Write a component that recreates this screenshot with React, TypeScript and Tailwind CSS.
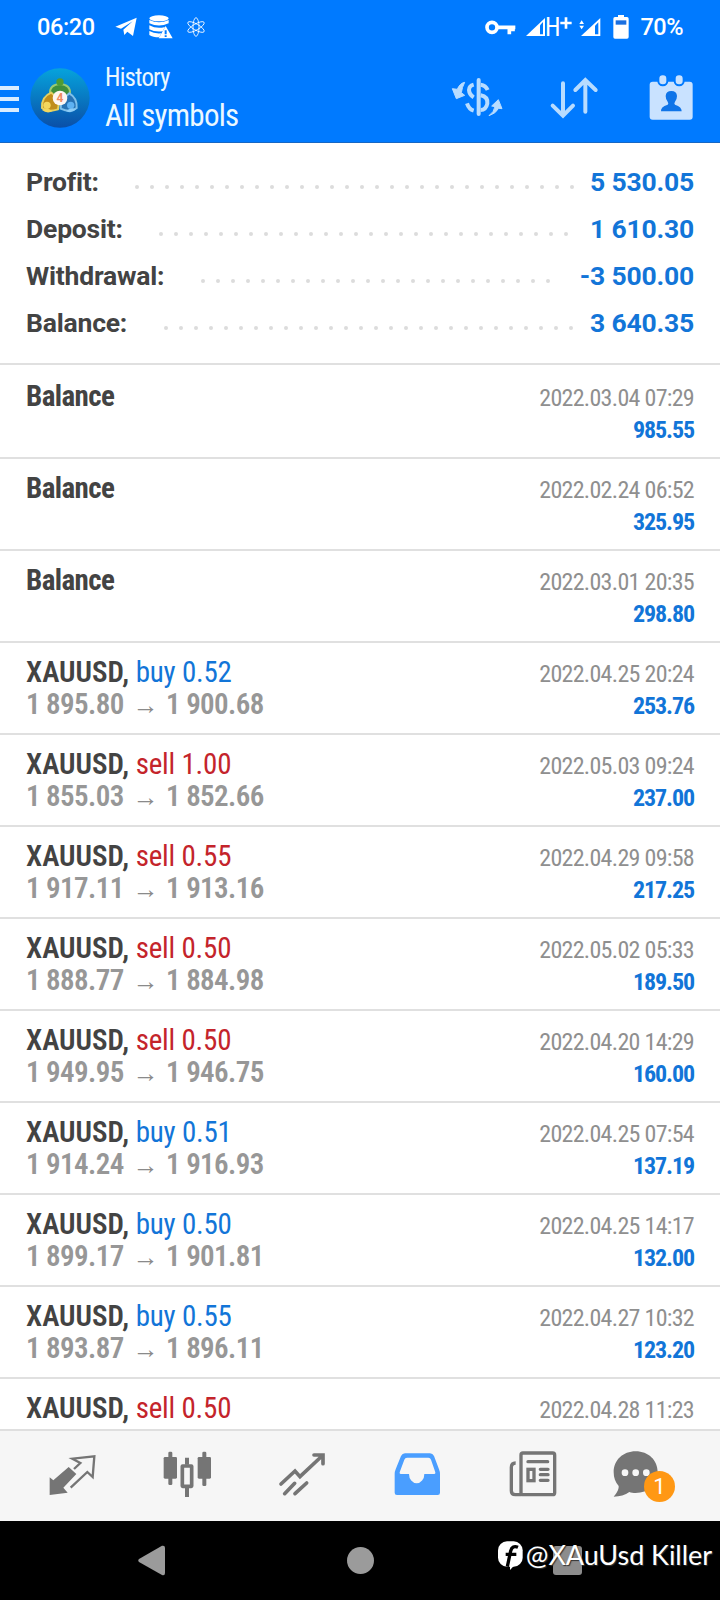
import { memo } from "react";
import type { ReactNode } from "react";

type DealKind = "buy" | "sell" | "balance";

interface Deal {
  kind: DealKind;
  volume?: string;
  open?: string;
  close?: string;
  time: string;
  profit: string;
}

const SUMMARY = [
  { label: "Profit:", value: "5 530.05", dots: 30 },
  { label: "Deposit:", value: "1 610.30", dots: 28 },
  { label: "Withdrawal:", value: "-3 500.00", dots: 24 },
  { label: "Balance:", value: "3 640.35", dots: 28 },
];

const DEALS: Deal[] = [
  { kind: "balance", time: "2022.03.04 07:29", profit: "985.55" },
  { kind: "balance", time: "2022.02.24 06:52", profit: "325.95" },
  { kind: "balance", time: "2022.03.01 20:35", profit: "298.80" },
  { kind: "buy", volume: "0.52", open: "1 895.80", close: "1 900.68", time: "2022.04.25 20:24", profit: "253.76" },
  { kind: "sell", volume: "1.00", open: "1 855.03", close: "1 852.66", time: "2022.05.03 09:24", profit: "237.00" },
  { kind: "sell", volume: "0.55", open: "1 917.11", close: "1 913.16", time: "2022.04.29 09:58", profit: "217.25" },
  { kind: "sell", volume: "0.50", open: "1 888.77", close: "1 884.98", time: "2022.05.02 05:33", profit: "189.50" },
  { kind: "sell", volume: "0.50", open: "1 949.95", close: "1 946.75", time: "2022.04.20 14:29", profit: "160.00" },
  { kind: "buy", volume: "0.51", open: "1 914.24", close: "1 916.93", time: "2022.04.25 07:54", profit: "137.19" },
  { kind: "buy", volume: "0.50", open: "1 899.17", close: "1 901.81", time: "2022.04.25 14:17", profit: "132.00" },
  { kind: "buy", volume: "0.55", open: "1 893.87", close: "1 896.11", time: "2022.04.27 10:32", profit: "123.20" },
  { kind: "sell", volume: "0.50", open: "1 889.26", close: "1 887.71", time: "2022.04.28 11:23", profit: "77.50" },
];

function StatusBar() {
  return (
    <div className="flex h-[54px] items-center pl-[37px] pr-[37px] text-white">
      <span className="w-[58px] text-[23.5px] leading-[54px] font-medium tracking-[-0.4px]">06:20</span>
      <svg className="ml-5 h-5 w-[22px]" viewBox="0 0 66 60" fill="currentColor">
        <path d="M1 29 65 2 54 57 37 44 28 54 25 38 53 13 18 35Z" />
      </svg>
      <svg className="ml-[12px] h-6 w-6" viewBox="0 0 72 72" fill="currentColor">
        <ellipse cx="30" cy="10" rx="29" ry="9" />
        <path d="M1 15q29 14 58 0v10q-29 13-58 0ZM1 31q22 12 47 5l-7 13q-24 3-40-6ZM1 48q15 9 36 7l-6 12q-20 0-30-7Z" />
        <path fillRule="evenodd" d="M50 33 71 70H29ZM47 46v12h6V46ZM47 61v5h6v-5Z" />
      </svg>
      <svg className="ml-[14px] h-5 w-[18px]" viewBox="0 0 54 60" fill="none" stroke="currentColor" strokeWidth="2.5">
        <ellipse cx="27" cy="30" rx="9" ry="28" />
        <ellipse cx="27" cy="30" rx="9" ry="28" transform="rotate(60 27 30)" />
        <ellipse cx="27" cy="30" rx="9" ry="28" transform="rotate(120 27 30)" />
      </svg>

      <div className="ml-auto flex items-center">
        <svg className="h-[15px] w-[31px]" viewBox="0 0 93 45" fill="none" stroke="currentColor">
          <circle cx="21" cy="22" r="15" strokeWidth="11" />
          <path d="M36 22H91M73 22V43M84 22V34" strokeWidth="11" />
        </svg>
        <svg className="ml-[10px] h-[18px] w-[19px]" viewBox="0 0 57 54">
          <path d="M0 54 57 0V54Z" fill="currentColor" />
          <path d="M42 22 51 12V49H42Z" fill="#007aff" />
        </svg>
        <span className="mt-[2px] text-[25px] leading-[52px] font-stretch-condensed">H</span>
        <svg className="mb-[9px] h-[12px] w-[12px]" viewBox="0 0 36 36" stroke="currentColor" strokeWidth="8">
          <path d="M18 1V35M1 18H35" />
        </svg>
        <svg className="ml-[7px] h-[18px] w-[22px]" viewBox="0 0 66 54" fill="currentColor">
          <path d="M1 18 8 7 15 18ZM1 23 8 34 15 23Z" />
          <path d="M6 54 64 0V54Z" />
          <path d="M48 23 58 13V49H48Z" fill="#007aff" />
        </svg>
        <svg className="ml-[12px] h-6 w-[16px]" viewBox="0 0 48 72">
          <path d="M15 0H33V6H42Q47 6 47 11V66Q47 71 42 71H6Q1 71 1 66V11Q1 6 6 6H15Z" fill="currentColor" />
          <path d="M8 16H40V29H8Z" fill="#1a6fe0" />
        </svg>
        <span className="ml-[11px] text-[23.5px] leading-[54px] font-medium tracking-[-0.5px]">70%</span>
      </div>
    </div>
  );
}

function AppLogo() {
  return (
    <svg className="ml-[11px] h-[60px] w-[60px] shrink-0" viewBox="0 0 180 180">
      <defs>
        <linearGradient id="sky" x1="0" y1="0" x2="0" y2="1">
          <stop offset="0" stopColor="#06a3dc" />
          <stop offset="1" stopColor="#0a4fa8" />
        </linearGradient>
      </defs>
      <circle cx="90" cy="90" r="89" fill="url(#sky)" />
      <g strokeWidth="6">
        <path d="M60 76Q58 50 90 48 122 50 120 76L104 92H76Z" fill="#3f8f3c" stroke="#9acb72" />
        <path d="M64 74Q34 86 36 120 52 134 84 124L88 98Z" fill="#c08d1a" stroke="#e5d060" />
        <path d="M118 76Q142 90 140 120 122 136 92 122L94 98Z" fill="#2873b4" stroke="#7fc0ea" />
      </g>
      <circle cx="90" cy="42" r="11" fill="#4f9c34" />
      <circle cx="51" cy="112" r="11" fill="#f2d75e" />
      <path d="M36 126Q50 116 68 130 50 138 36 126Z" fill="#f2d75e" />
      <circle cx="122" cy="112" r="11" fill="#5fb2f2" />
      <path d="M108 130Q124 116 138 124 126 138 108 130Z" fill="#8ccdf8" />
      <circle cx="90" cy="90" r="22" fill="#fdf6f2" />
      <text x="90" y="103" textAnchor="middle" fontSize="36" fontWeight="700" fill="#ef8a60" fontFamily="Roboto, sans-serif">
        4
      </text>
    </svg>
  );
}

function AppBar() {
  return (
    <div className="flex h-[88px] items-center pr-[19px]">
      <div className="flex w-[19px] flex-col gap-[7px] pt-[2px]">
        <span className="h-1 bg-[#d9ecff]" />
        <span className="h-1 bg-[#d9ecff]" />
        <span className="h-1 bg-[#d9ecff]" />
      </div>
      <AppLogo />
      <div className="ml-[15px] flex h-full flex-col whitespace-nowrap text-[#ebf8ff] font-stretch-condensed">
        <span className="mt-[8px] text-[25px] leading-[31px] font-[450] tracking-[-0.85px]">History</span>
        <span className="mt-[3px] text-[31px] leading-[40px] font-[450] tracking-[-0.75px]">All symbols</span>
      </div>
      <div className="ml-auto flex gap-[37px] text-[#b8dcff]">
        {/* currency conversion */}
        <svg className="h-[60px] w-[60px]" viewBox="0 0 180 180" fill="none" stroke="currentColor" strokeWidth="12">
          <path d="M95 36V138" strokeLinecap="round" />
          <path d="M101 50Q116 52 122 66M80 50Q66 54 66 66 67 80 80 88M101 82Q123 86 121 107 117 126 101 126M60 106Q66 124 80 128" />
          <path d="M53 43Q38 46 31 64L16 62 28 92 53 82 43 74Q45 58 53 43ZM126 143Q141 132 144 116L134 114 154 95 165 122 155 121Q146 137 126 143Z" fill="currentColor" stroke="currentColor" strokeWidth="3" strokeLinejoin="round" />
        </svg>
        <svg className="h-[60px] w-[60px]" viewBox="0 0 180 180" fill="none" stroke="currentColor" strokeWidth="12" strokeLinecap="round">
          <path d="M57 46V140M26 113 57 143 87 113M124 131V38M94 66 124 36 155 66" />
        </svg>
        <svg className="h-[60px] w-[60px] text-[#c9e2ff]" viewBox="0 0 180 180">
          <rect x="26" y="41" width="129" height="114" rx="9" fill="currentColor" />
          <g fill="currentColor" stroke="#007aff" strokeWidth="6">
            <rect x="52" y="19" width="27" height="33" rx="13" />
            <rect x="101" y="19" width="27" height="33" rx="13" />
          </g>
          <path d="M60 130Q58 117 80 110 84 107 80 101 74 94 74 84 75 69 91 69 107 69 108 84 108 94 102 101 98 107 102 110 123 117 122 130Z" fill="#0f74e8" />
        </svg>
      </div>
    </div>
  );
}

function Summary() {
  return (
    <div className="h-[222px] shrink-0 border-b-2 border-[#e0e0e0] px-[26px] pt-[15px] text-[26.5px] leading-[47px] font-bold tracking-[-0.2px]">
      {SUMMARY.map((row) => (
        <div key={row.label} className="flex h-[47px] justify-between whitespace-nowrap">
          <span className="text-[#434343]">{row.label}</span>
          <div className="mt-[27px] ml-[31px] mr-auto flex">
            {Array.from({ length: row.dots }, (_, i) => (
              <span key={i} className="flex w-[15px] justify-center">
                <i className="h-1 w-1 rounded-full bg-[#dcdcdc]" />
              </span>
            ))}
          </div>
          <span className="text-[#1275d8]">{row.value}</span>
        </div>
      ))}
    </div>
  );
}

const DealRow = memo(function DealRow({ deal }: { deal: Deal }) {
  const isBalance = deal.kind === "balance";
  const kindColor = deal.kind === "buy" ? "text-[#1275d8]" : "text-[#c4242b]";

  return (
    <div className="h-[92px] shrink-0 border-b-2 border-[#e0e0e0] px-[26px] pt-[13px] whitespace-nowrap font-stretch-condensed">
      <div className="flex h-8 items-baseline justify-between leading-8">
        {isBalance ? (
          <b className="text-[29px] font-bold tracking-[-0.6px] text-[#434343]">Balance</b>
        ) : (
          <span className="text-[29px]">
            <b className="font-semibold text-[#434343]">XAUUSD,</b>
            <span className={`tracking-[-0.2px] ${kindColor}`}> {deal.kind} {deal.volume}</span>
          </span>
        )}
        <span className="text-[24px] tracking-[-0.7px] text-[#8f8f8f]">{deal.time}</span>
      </div>
      <div className="flex h-8 items-baseline justify-between leading-8">
        <span className="text-[29px] font-semibold tracking-[-0.6px] text-[#979797]">
          {isBalance ? (
            "\u00a0"
          ) : (
            <>
              {deal.open}
              <span className="mr-[8px] ml-[9px] font-['Liberation_Sans'] text-[26px] text-[#8a8a8a]">→</span>
              {deal.close}
            </>
          )}
        </span>
        <span className="text-[24px] font-bold tracking-[-1.1px] text-[#1275d8]">{deal.profit}</span>
      </div>
    </div>
  );
});

function TabIcon({ children, active = false }: { children: ReactNode; active?: boolean }) {
  return (
    <div className={`relative flex w-[115px] items-center justify-center ${active ? "text-[#4a9eff]" : "text-[#757575]"}`}>
      {children}
    </div>
  );
}

function TabBar() {
  return (
    <div className="flex h-[92px] shrink-0 border-t-2 border-[#dfdfdf] bg-[#f6f6f6] px-[14px]">
      <TabIcon>
        <svg className="h-[60px] w-[60px]" viewBox="0 0 180 180">
          <path d="M23 94 34 103 80 63 103 84 64 125 77 140 23 147Z" fill="currentColor" />
          <path d="M96 69 115 51 91 38 157 31 152 93 136 78 86 125" fill="none" stroke="currentColor" strokeWidth="7" />
        </svg>
      </TabIcon>
      <TabIcon>
        <svg className="h-[60px] w-[60px]" viewBox="0 0 180 180" fill="currentColor">
          <rect x="20" y="33" width="40" height="65" rx="4" />
          <rect x="34" y="17" width="12" height="100" rx="4" />
          <rect x="76" y="60" width="28" height="61" rx="1" fill="none" stroke="currentColor" strokeWidth="11" />
          <path d="M84 35H96V56H84ZM84 124H96V153H84Z" />
          <rect x="122" y="33" width="40" height="65" rx="4" />
          <rect x="136" y="17" width="12" height="103" rx="4" />
        </svg>
      </TabIcon>
      <TabIcon>
        <svg className="h-[60px] w-[60px]" viewBox="0 0 180 180" fill="none" stroke="currentColor" strokeWidth="11" strokeLinecap="round">
          <path d="M27 114 69 75 84 92 150 30M126 27H153V53M38 143 68 112M69 143 104 111" />
        </svg>
      </TabIcon>
      <TabIcon active>
        <svg className="h-[60px] w-[60px]" viewBox="0 0 180 180" fill="currentColor">
          <path
            fillRule="evenodd"
            d="M23 140V84Q23 77 26 70L42 30Q46 22 54 22H129Q137 22 141 30L156 70Q159 77 159 84V140Q159 147 152 147H30Q23 147 23 140ZM41 84H66A23 28 0 0 0 112 84H142Q146 84 145 79L132 41Q130 35 124 35H60Q54 35 52 41L38 79Q37 84 41 84Z"
          />
        </svg>
      </TabIcon>
      <TabIcon>
        <svg className="h-[60px] w-[60px]" viewBox="0 0 180 180" fill="none" stroke="currentColor" strokeWidth="10">
          <rect x="57" y="21" width="101" height="125" rx="6" />
          <path d="M41 51Q28 51 28 64V134Q28 146 40 146H57" />
          <path d="M78 47H137M115 70H138M115 86H138M115 103H138" strokeLinecap="round" />
          <rect x="78" y="70" width="18" height="34" />
        </svg>
      </TabIcon>
      <TabIcon>
        <svg className="h-[60px] w-[60px] overflow-visible" viewBox="0 0 180 180" fill="currentColor">
          <path d="M56 16C94 16 122 42 122 79 122 116 94 141 56 141 49 141 42 140 37 138 25 147 8 152-10 152-2 143 6 131 5 120-5 109-10 96-10 79-10 42 18 16 56 16Z" />
          <g fill="#f6f6f6">
            <circle cx="24" cy="80" r="10" />
            <circle cx="56" cy="80" r="10" />
            <circle cx="88" cy="80" r="10" />
          </g>
        </svg>
        <span className="absolute top-[40px] left-[55px] flex h-[31px] w-[31px] items-center justify-center rounded-full bg-[#ff9814] text-[22px] leading-none text-white">
          1
        </span>
      </TabIcon>
    </div>
  );
}

function SystemNav() {
  return (
    <div className="relative flex h-[79px] shrink-0 items-center bg-black text-[#9b9b9b]">
      <svg className="ml-[138px] h-[31px] w-[27px]" viewBox="0 0 27 31" fill="currentColor">
        <path d="M1 14 24 0.8Q27 0 27 3V28Q27 31 24 30L1 17Q-.5 15.500 1 14Z" />
      </svg>
      <span className="ml-[182px] h-[27px] w-[27px] rounded-full bg-[#9b9b9b]" />
      <span className="ml-[179px] h-[29px] w-[29px] rounded-[3px] bg-[#8c8c8c]" />
      <div className="absolute top-[18px] right-[8px] flex items-center text-white">
        <svg className="mt-px mr-[3px] h-[29px] w-[25px]" viewBox="0 0 75 87">
          <rect x="0" y="1" width="74" height="76" rx="27" fill="currentColor" />
          <path d="M36 66V87L48 74Z" fill="currentColor" />
          <path d="M60 19Q43 12 38 30L28 77M23 40H55" fill="none" stroke="#000" strokeWidth="10" />
        </svg>
        <span className="font-['Lato',sans-serif] text-[27px] leading-8 tracking-[-0.05px] whitespace-nowrap [text-shadow:1px_1px_1px_#333]">
          @XAuUsd Killer
        </span>
      </div>
    </div>
  );
}

export default function App() {
  return (
    <div className="flex h-[1600px] w-[720px] flex-col overflow-hidden bg-white font-['Roboto',sans-serif]">
      <header className="h-[143px] shrink-0 border-b border-[#1767c4] bg-[#007aff]">
        <StatusBar />
        <AppBar />
      </header>
      <main className="flex min-h-0 flex-1 flex-col overflow-hidden">
        <Summary />
        <div className="flex flex-col pt-[2px]">
          {DEALS.map((deal) => (
            <DealRow key={deal.time} deal={deal} />
          ))}
        </div>
      </main>
      <TabBar />
      <SystemNav />
    </div>
  );
}
